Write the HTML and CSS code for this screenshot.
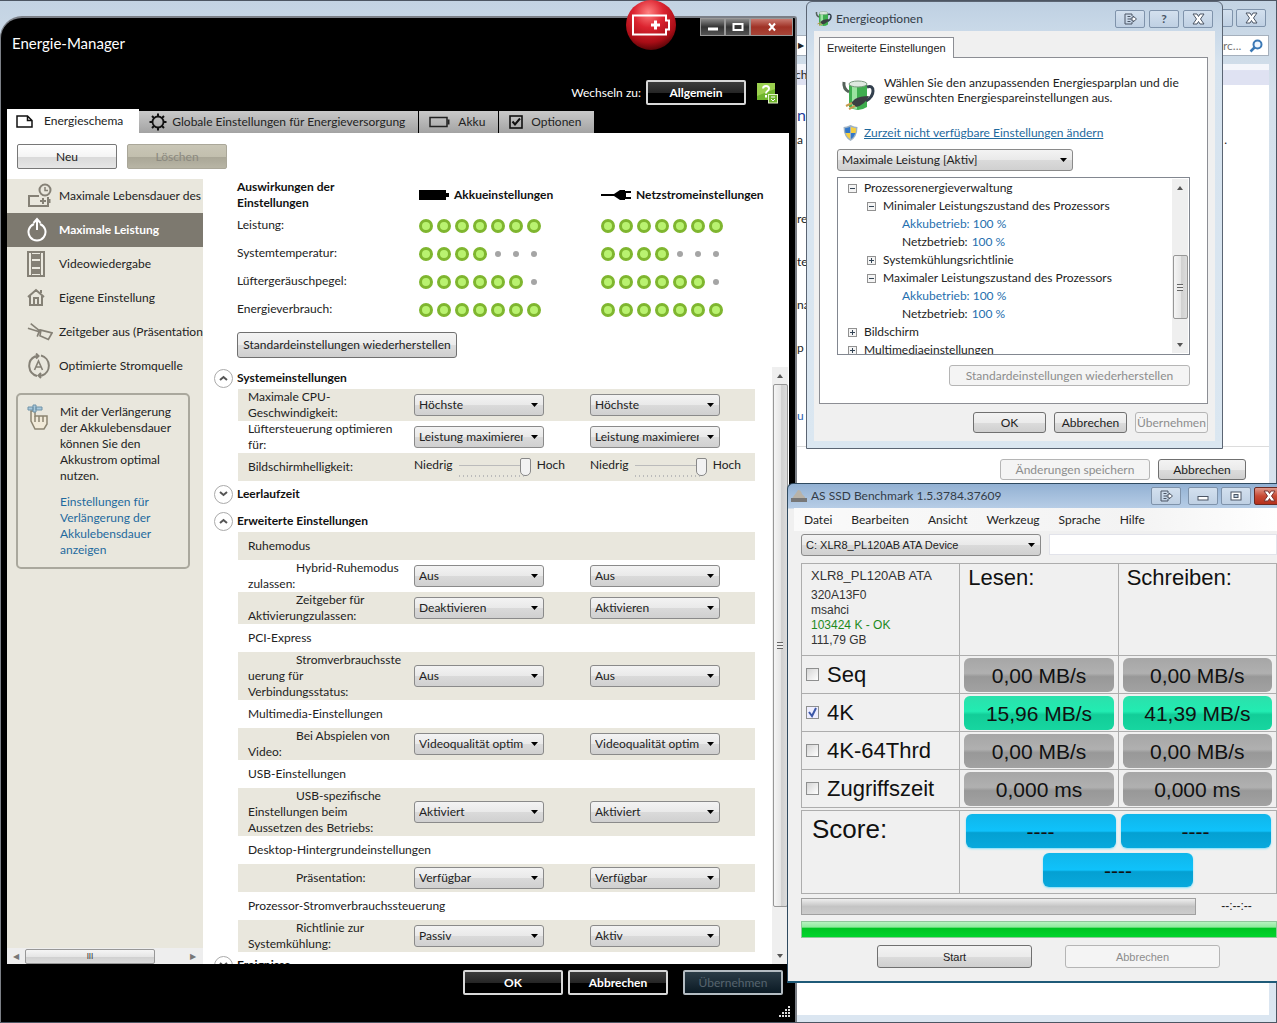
FILE: index.html
```
<!DOCTYPE html>
<html lang="de">
<head>
  <meta charset="UTF-8" />
  <meta name="viewport" content="width=device-width, initial-scale=1.0"/>
  <title>Energie-Manager</title>
  <link rel="stylesheet" href="styles.css">
</head>
<body>
  <!-- Explorer window in the back -->
  <div class="explorer">
    <div class="explorer-title">
      <button class="aero-btn" aria-label="Maximieren"></button>
      <button class="aero-btn" aria-label="Schließen"><svg width="13" height="12" viewBox="0 0 13 12"><path d="M1 1h4l1.500 2.500L8 1h4L8.500 6 12 11H8L6.500 8.500 5 11H1l3.500-5z" fill="#fff" stroke="#4b5564"/></svg></button>
    </div>
    <div class="explorer-address">
      <span class="arrow">▶</span>
      <span class="search">rc...
        <svg width="14" height="14" viewBox="0 0 14 14"><circle cx="8.500" cy="5.500" r="4" fill="#eef6ff" stroke="#3a78b5" stroke-width="2"/><path d="M5.500 8.500L1.500 12.500" stroke="#3a78b5" stroke-width="2.500"/></svg>
      </span>
    </div>
    <div class="explorer-toolbar">ch</div>
    <div class="explorer-body">
      <div class="explorer-text">
        <p class="head">n</p>
        <p class="first"><span>a</span><span>.</span></p>
        <p>re</p>
        <p>te</p>
        <p>na</p>
        <p>p</p>
        <p class="more">u</p>
      </div>
      <div class="explorer-footer">
        <button class="btn wide" disabled>Änderungen speichern</button>
        <button class="btn">Abbrechen</button>
      </div>
    </div>
  </div>

  <!-- Energie-Manager -->
  <div class="manager">
    <svg class="ball" width="52" height="52" viewBox="0 0 52 52">
      <defs><radialGradient id="red" cx="45%" cy="25%" r="75%"><stop offset="0" stop-color="#ff8080"/><stop offset=".4" stop-color="#dc2430"/><stop offset=".8" stop-color="#a80d16"/><stop offset="1" stop-color="#5c0508"/></radialGradient></defs>
      <circle cx="26" cy="25" r="25" fill="url(#red)"/>
      <path d="M8 15.500h33v5h3v9h-3v5H8z" fill="none" stroke="#fff" stroke-width="2"/>
      <path d="M26 25h9M30.500 20.500v9" stroke="#fff" stroke-width="3"/>
    </svg>
    <div class="manager-head">
      <h1>Energie-Manager</h1>
      <div class="window-btns">
        <button aria-label="Minimieren"><svg width="12" height="12" viewBox="0 0 12 12"><path d="M1 8h10" stroke="#fff" stroke-width="3"/></svg></button>
        <button aria-label="Maximieren"><svg width="12" height="12" viewBox="0 0 12 12"><rect x="1.500" y="3" width="9" height="6" fill="none" stroke="#fff" stroke-width="2"/></svg></button>
        <button class="close" aria-label="Schließen"><svg width="10" height="10" viewBox="0 0 10 10"><path d="M2 1.500l6 7M8 1.500l-6 7" stroke="#fff" stroke-width="2"/></svg></button>
      </div>
    </div>
    <div class="switch">
      <span>Wechseln zu:</span>
      <button class="dark-btn">Allgemein</button>
      <svg width="22" height="22" viewBox="0 0 22 22"><rect x="0" y="1" width="18" height="17" fill="#6fb52c"/><path d="M0 1h18v6L0 14z" fill="#9bd04e"/><path d="M6 6.500q0-2.500 3-2.500t3 2.500q0 1.500-1.500 2.500T9 11.500M9 13v2.500" fill="none" stroke="#fff" stroke-width="2"/><rect x="11.500" y="12.500" width="9" height="8.500" fill="#6fb52c" stroke="#e3f3c8"/><path d="M14 15h4M14 17l2 2 2-2" stroke="#fff" fill="none"/></svg>
    </div>
    <div class="tabs">
      <button class="tab active">
        <svg width="18" height="13" viewBox="0 0 18 13"><path d="M1 1h10.500L16 5.500V12H1zM11.500 1v4.500H16" fill="none" stroke="#111" stroke-width="1.500"/></svg>
        Energieschema
      </button>
      <button class="tab gear">
        <svg width="18" height="18" viewBox="0 0 18 18"><circle cx="9" cy="9" r="5.500" fill="none" stroke="#111" stroke-width="1.800"/><path d="M9 3.500V0.500M9 14.500v3M3.500 9h-3M14.500 9h3M5 5L3 3M13 5l2-2M5 13l-2 2M13 13l2 2" stroke="#111" stroke-width="2"/></svg>
        Globale Einstellungen für Energieversorgung
      </button>
      <button class="tab">
        <svg width="21" height="12" viewBox="0 0 21 12"><path d="M1 1.500h17v9H1z" fill="none" stroke="#222" stroke-width="1.500"/><path d="M19.500 3.500v5" stroke="#222" stroke-width="2"/></svg>
        Akku
      </button>
      <button class="tab">
        <svg width="14" height="14" viewBox="0 0 14 14"><rect x="1" y="1" width="12" height="12" fill="none" stroke="#111" stroke-width="1.600"/><path d="M3.500 6.500L6 9.500l5-6" fill="none" stroke="#111" stroke-width="2"/></svg>
        Optionen
      </button>
    </div>

    <div class="manager-body">
      <div class="toolbar">
        <button class="light-btn">Neu</button>
        <button class="light-btn" disabled>Löschen</button>
      </div>
      <div class="columns">
        <div class="sidebar">
          <ul class="plans">
            <li><svg width="26" height="26" viewBox="0 0 26 26" fill="none" stroke="#858176" stroke-width="2"><circle cx="18" cy="7" r="5.500"/><path d="M18 4v3.500h3" stroke-width="1.500"/><path d="M12 13H2v10h19v-9M22.500 16v4M13 18h6M16 15v6"/></svg>Maximale Lebensdauer des</li>
            <li class="selected"><svg width="26" height="26" viewBox="0 0 26 26" fill="none" stroke="#fff" stroke-width="2"><path d="M7 7a8.500 8.500 0 1 0 6 0M10 13V3M6.500 6L10 2l3.500 4"/></svg>Maximale Leistung</li>
            <li><svg width="26" height="26" viewBox="0 0 26 26"><path d="M0 0h18v26H0z" fill="#858176"/><path d="M2 2h2v22H2zM14 2h2v22h-2zM5 2h8v1H5zM5 8h8v2H5zM5 16h8v2H5zM5 23h8v1H5z" fill="#eceae0"/></svg>Videowiedergabe</li>
            <li><svg width="26" height="26" viewBox="0 0 26 26" fill="none" stroke="#858176" stroke-width="2"><path d="M1 12L9 5l8 7M3 11v9h12v-9M14 8V5M7 20v-7h4v7"/></svg>Eigene Einstellung</li>
            <li><svg width="26" height="26" viewBox="0 0 28 26" fill="none" stroke="#858176" stroke-width="1.800"><path d="M4 4l10 8M1 9l13 4M14 10l-3 8M15 11l12 3-4 7-9-4z"/></svg>Zeitgeber aus (Präsentation</li>
            <li><svg width="26" height="26" viewBox="0 0 26 26" fill="none" stroke="#858176" stroke-width="2"><path d="M10 23A10.500 10.500 0 0 1 8 3.500l3-.5M9 .500L11.500 3 9 5.500M14 2.500A10.500 10.500 0 0 1 15 22.500h-3M14 20l-2.500 2.500L14 25"/><path d="M7.500 17l4-9 4 9M9 14h5" stroke-width="1.600"/></svg>Optimierte Stromquelle</li>
          </ul>
          <div class="tip">
            <svg width="22" height="26" viewBox="0 0 22 26"><path d="M4 17V7h4v5h12v8l-3 5H8z" fill="#f1ead8" stroke="#8c8571" stroke-width="1.500"/><path d="M8 12v6M12 12v6M16 12v6" stroke="#8c8571" stroke-width="1.500"/><path d="M1 3h5v3H1zM9 3h6v3H9zM6 1h3v7H6z" fill="#a9c9dc" stroke="#6f93a8"/></svg>
            <div>
              <p>Mit der Verlängerung<br>der Akkulebensdauer<br>können Sie den<br>Akkustrom optimal<br>nutzen.</p>
              <a href="#">Einstellungen für<br>Verlängerung der<br>Akkulebensdauer<br>anzeigen</a>
            </div>
          </div>
          <div class="hscroll"><span>◀</span><i class="thumb">III</i><span>▶</span></div>
        </div>

        <div class="main">
          <table class="impact">
            <thead>
              <tr>
                <th>Auswirkungen der<br>Einstellungen</th>
                <th><span><svg width="30" height="12" viewBox="0 0 30 12"><path d="M0 1h27v3h3v4h-3v3H0z"/></svg>Akkueinstellungen</span></th>
                <th><span><svg width="30" height="12" viewBox="0 0 30 12"><path d="M0 5h13l6-4h5v1h6v2h-5v4h5v2h-6v1h-5l-6-4H0z"/></svg>Netzstromeinstellungen</span></th>
              </tr>
            </thead>
            <tbody>
              <tr><td>Leistung:</td><td class="dots" data-level="7"></td><td class="dots" data-level="7"></td></tr>
              <tr><td>Systemtemperatur:</td><td class="dots" data-level="4"></td><td class="dots" data-level="4"></td></tr>
              <tr><td>Lüftergeräuschpegel:</td><td class="dots" data-level="6"></td><td class="dots" data-level="6"></td></tr>
              <tr><td>Energieverbrauch:</td><td class="dots" data-level="7"></td><td class="dots" data-level="7"></td></tr>
            </tbody>
          </table>
          <button class="btn restore">Standardeinstellungen wiederherstellen</button>

          <div class="settings">
            <div class="settings-list">
              <section>
                <h2><button class="fold" aria-label="Zuklappen"><svg width="9" height="6" viewBox="0 0 9 6"><path d="M1 5l3.500-3L8 5" fill="none" stroke="#555" stroke-width="2"/></svg></button>Systemeinstellungen</h2>
                <div class="row shade">
                  <label for="cpu-a">Maximale CPU-<br>Geschwindigkeit:</label>
                  <select id="cpu-a"><option>Höchste</option></select>
                  <select aria-label="CPU Netz"><option>Höchste</option></select>
                </div>
                <div class="row">
                  <label for="fan-a">Lüftersteuerung optimieren<br>für:</label>
                  <select id="fan-a"><option>Leistung maximieren</option></select>
                  <select aria-label="Lüfter Netz"><option>Leistung maximieren</option></select>
                </div>
                <div class="row small shade">
                  <label for="bright-a">Bildschirmhelligkeit:</label>
                  <div class="slider">Niedrig <input id="bright-a" type="range" value="100"> Hoch</div>
                  <div class="slider">Niedrig <input aria-label="Helligkeit Netz" type="range" value="100"> Hoch</div>
                </div>
              </section>
              <section class="closed">
                <h2><button class="fold" aria-label="Aufklappen"><svg width="9" height="6" viewBox="0 0 9 6"><path d="M1 1l3.500 3L8 1" fill="none" stroke="#555" stroke-width="2"/></svg></button>Leerlaufzeit</h2>
              </section>
              <section>
                <h2><button class="fold" aria-label="Zuklappen"><svg width="9" height="6" viewBox="0 0 9 6"><path d="M1 5l3.500-3L8 5" fill="none" stroke="#555" stroke-width="2"/></svg></button>Erweiterte Einstellungen</h2>
                <div class="row small shade"><h3>Ruhemodus</h3></div>
                <div class="row">
                  <label class="sub" for="hybrid">Hybrid-Ruhemodus<br>zulassen:</label>
                  <select id="hybrid"><option>Aus</option></select>
                  <select aria-label="Hybrid Netz"><option>Aus</option></select>
                </div>
                <div class="row shade">
                  <label class="sub" for="timer">Zeitgeber für<br>Aktivierungzulassen:</label>
                  <select id="timer"><option>Deaktivieren</option></select>
                  <select aria-label="Zeitgeber Netz"><option>Aktivieren</option></select>
                </div>
                <div class="row small"><h3>PCI-Express</h3></div>
                <div class="row tall shade">
                  <label class="sub" for="pci">Stromverbrauchsste<br>uerung für<br>Verbindungsstatus:</label>
                  <select id="pci"><option>Aus</option></select>
                  <select aria-label="PCI Netz"><option>Aus</option></select>
                </div>
                <div class="row small"><h3>Multimedia-Einstellungen</h3></div>
                <div class="row shade">
                  <label class="sub" for="video">Bei Abspielen von<br>Video:</label>
                  <select id="video"><option>Videoqualität optim</option></select>
                  <select aria-label="Video Netz"><option>Videoqualität optim</option></select>
                </div>
                <div class="row small"><h3>USB-Einstellungen</h3></div>
                <div class="row tall shade">
                  <label class="sub" for="usb">USB-spezifische<br>Einstellungen beim<br>Aussetzen des Betriebs:</label>
                  <select id="usb"><option>Aktiviert</option></select>
                  <select aria-label="USB Netz"><option>Aktiviert</option></select>
                </div>
                <div class="row small"><h3>Desktop-Hintergrundeinstellungen</h3></div>
                <div class="row small shade">
                  <label class="sub" for="show">Präsentation:</label>
                  <select id="show"><option>Verfügbar</option></select>
                  <select aria-label="Präsentation Netz"><option>Verfügbar</option></select>
                </div>
                <div class="row small"><h3>Prozessor-Stromverbrauchssteuerung</h3></div>
                <div class="row shade">
                  <label class="sub" for="cool">Richtlinie zur<br>Systemkühlung:</label>
                  <select id="cool"><option>Passiv</option></select>
                  <select aria-label="Kühlung Netz"><option>Aktiv</option></select>
                </div>
              </section>
              <section>
                <h2><button class="fold" aria-label="Aufklappen"><svg width="9" height="6" viewBox="0 0 9 6"><path d="M1 1l3.500 3L8 1" fill="none" stroke="#555" stroke-width="2"/></svg></button>Ereignisse</h2>
              </section>
            </div>
            <div class="vscroll"><span class="up"></span><i class="thumb"></i><span class="down"></span></div>
          </div>
        </div>
      </div>
    </div>

    <div class="manager-foot">
      <button class="dark-btn">OK</button>
      <button class="dark-btn">Abbrechen</button>
      <button class="dark-btn apply" disabled>Übernehmen</button>
    </div>
    <svg class="grip" width="12" height="12" viewBox="0 0 12 12" fill="#ddd"><path d="M9 0h2v2H9zM9 3h2v2H9zM9 6h2v2H9zM9 9h2v2H9zM6 3h2v2H6zM6 6h2v2H6zM6 9h2v2H6zM3 6h2v2H3zM3 9h2v2H3zM0 9h2v2H0z"/></svg>
  </div>

  <!-- Energieoptionen -->
  <div class="options">
    <div class="titlebar">
      <svg width="17" height="17" viewBox="0 0 34 34"><use href="#pot"/></svg>
      <span class="title">Energieoptionen</span>
      <button class="aero-btn" aria-label="Verschieben"><svg width="13" height="12" viewBox="0 0 13 12" fill="none" stroke="#4b5564"><path d="M8 3V1H1v10h7V9M3.500 3.500h3M3.500 6h3M3.500 8.500h3"/><path d="M7 5h2V3l3.500 3L9 9V7H7z" fill="#fff"/></svg></button>
      <button class="aero-btn help" aria-label="Hilfe">?</button>
      <button class="aero-btn" aria-label="Schließen"><svg width="13" height="12" viewBox="0 0 13 12"><path d="M1 1h4l1.500 2.500L8 1h4L8.500 6 12 11H8L6.500 8.500 5 11H1l3.500-5z" fill="#fff" stroke="#4b5564"/></svg></button>
    </div>
    <div class="client">
      <span class="page-tab">Erweiterte Einstellungen</span>
      <div class="page">
        <div class="intro">
          <svg width="34" height="34" viewBox="0 0 34 34">
            <g id="pot">
              <path d="M8 7q9-4 18 0v22q-9 6-18 0z" fill="#3fae4f"/>
              <path d="M11 8q3-1 5-1v24q-3 0-5-1z" fill="#9be3a0"/>
              <ellipse cx="17" cy="6" rx="9" ry="3" fill="#dfe9e0" stroke="#7c9a80"/>
              <path d="M8 14Q2 11 3 4" fill="none" stroke="#55625a" stroke-width="3"/>
              <path d="M26 9q6-2 6 4t-7 10" fill="none" stroke="#333f4d" stroke-width="3"/>
              <path d="M28 18q-9 0-14 3l-4 4 5 4q9-2 13-11z" fill="#3b3f42"/>
              <path d="M11 25l-6 3M14 28l-6 3" stroke="#c79a4e" stroke-width="2"/>
            </g>
          </svg>
          <p>Wählen Sie den anzupassenden Energiesparplan und die<br>gewünschten Energiespareinstellungen aus.</p>
        </div>
        <div class="unlock">
          <svg width="15" height="16" viewBox="0 0 15 16"><path d="M7.500 0q4 2 7 2 0 10-7 14Q.500 12 .500 2q3 0 7-2z" fill="#9fb3c4"/><path d="M7 2Q4.500 3 2 3.300 2 6 2.500 8H7z" fill="#3377c8"/><path d="M8 2q2.500 1 5 1.300Q13 6 12.500 8H8z" fill="#f5cf42"/><path d="M7 8H2.500Q4 12 7 14z" fill="#f5cf42"/><path d="M8 8h4.500Q11 12 8 14z" fill="#3377c8"/></svg>
          <a href="#">Zurzeit nicht verfügbare Einstellungen ändern</a>
        </div>
        <select class="plan" aria-label="Energiesparplan"><option>Maximale Leistung [Aktiv]</option></select>
        <div class="tree-box">
          <ul class="tree">
            <li><i class="box minus"></i>Prozessorenergieverwaltung</li>
            <li class="l2"><i class="box minus"></i>Minimaler Leistungszustand des Prozessors</li>
            <li class="l3 blue">Akkubetrieb: 100 %</li>
            <li class="l3">Netzbetrieb: <span class="blue">100 %</span></li>
            <li class="l2"><i class="box plus"></i>Systemkühlungsrichtlinie</li>
            <li class="l2"><i class="box minus"></i>Maximaler Leistungszustand des Prozessors</li>
            <li class="l3 blue">Akkubetrieb: 100 %</li>
            <li class="l3">Netzbetrieb: <span class="blue">100 %</span></li>
            <li><i class="box plus"></i>Bildschirm</li>
            <li><i class="box plus"></i>Multimediaeinstellungen</li>
          </ul>
          <div class="vscroll"><span class="up"></span><i class="thumb"></i><span class="down"></span></div>
        </div>
        <button class="btn reset" disabled>Standardeinstellungen wiederherstellen</button>
      </div>
      <div class="dialog-btns">
        <button class="btn">OK</button>
        <button class="btn">Abbrechen</button>
        <button class="btn" disabled>Übernehmen</button>
      </div>
    </div>
  </div>

  <!-- AS SSD Benchmark -->
  <div class="ssd">
    <div class="titlebar">
      <svg width="16" height="14" viewBox="0 0 16 14"><path d="M2 8l3-4 2-3q3 0 4 4l3 3v3H0z" fill="#b9b3a8"/><path d="M0 9h16v4H0z" fill="#777"/></svg>
      <span class="title">AS SSD Benchmark 1.5.3784.37609</span>
      <button class="aero-btn" aria-label="Verschieben"><svg width="13" height="12" viewBox="0 0 13 12" fill="none" stroke="#4b5564"><path d="M8 3V1H1v10h7V9M3.500 3.500h3M3.500 6h3M3.500 8.500h3"/><path d="M7 5h2V3l3.500 3L9 9V7H7z" fill="#fff"/></svg></button>
      <button class="aero-btn" aria-label="Minimieren"><svg width="12" height="12" viewBox="0 0 12 12"><rect x="1" y="6.500" width="10" height="3.500" fill="#fff" stroke="#4b5564"/></svg></button>
      <button class="aero-btn" aria-label="Maximieren"><svg width="12" height="12" viewBox="0 0 12 12"><rect x="1" y="2" width="10" height="8" fill="#fff" stroke="#4b5564"/><rect x="4" y="4.500" width="4" height="3" fill="#bcd" stroke="#4b5564"/></svg></button>
      <button class="aero-btn red" aria-label="Schließen"><svg width="13" height="12" viewBox="0 0 13 12"><path d="M1 1h4l1.500 2.500L8 1h4L8.500 6 12 11H8L6.500 8.500 5 11H1l3.500-5z" fill="#fff" stroke="#733"/></svg></button>
    </div>
    <div class="menu"><a href="#">Datei</a><a href="#">Bearbeiten</a><a href="#">Ansicht</a><a href="#">Werkzeug</a><a href="#">Sprache</a><a href="#">Hilfe</a></div>
    <div class="ssd-body">
      <div class="drive">
        <select aria-label="Laufwerk"><option>C: XLR8_PL120AB ATA Device</option></select>
        <input type="text" aria-label="Name">
      </div>
      <table class="results">
        <thead>
          <tr>
            <td class="info"><p class="name">XLR8_PL120AB ATA</p><p>320A13F0</p><p>msahci</p><p class="ok">103424 K - OK</p><p>111,79 GB</p></td>
            <th>Lesen:</th>
            <th>Schreiben:</th>
          </tr>
        </thead>
        <tbody>
          <tr><td><label><input type="checkbox">Seq</label></td><td><div class="pill">0,00 MB/s</div></td><td><div class="pill">0,00 MB/s</div></td></tr>
          <tr><td><label><input type="checkbox" checked>4K</label></td><td><div class="pill green">15,96 MB/s</div></td><td><div class="pill green">41,39 MB/s</div></td></tr>
          <tr><td><label><input type="checkbox">4K-64Thrd</label></td><td><div class="pill">0,00 MB/s</div></td><td><div class="pill">0,00 MB/s</div></td></tr>
          <tr><td><label><input type="checkbox">Zugriffszeit</label></td><td><div class="pill">0,000 ms</div></td><td><div class="pill">0,000 ms</div></td></tr>
        </tbody>
      </table>
      <div class="score">
        <div class="score-label">Score:</div>
        <div class="score-values">
          <div class="pill blue">----</div>
          <div class="pill blue">----</div>
          <div class="pill blue">----</div>
        </div>
      </div>
      <div class="progress"><div class="bar"></div><span>--:--:--</span></div>
      <div class="bar full"></div>
      <div class="ssd-btns">
        <button class="btn">Start</button>
        <button class="btn" disabled>Abbrechen</button>
      </div>
    </div>
  </div>

  <script>
    // seven steps per cell, the first ones lit
    document.querySelectorAll(".dots").forEach(cell => {
      const level = Number(cell.dataset.level);
      for (let i = 0; i < 7; i++) {
        const dot = document.createElement("i");
        dot.className = i < level ? "dot on" : "dot";
        cell.appendChild(dot);
      }
    });
  </script>
</body>
</html>
```
FILE: styles.css
```
* {
  box-sizing: border-box;
}

body {
  margin: 0;
  height: 100vh;
  overflow: hidden;
  position: relative;
  font-family: Lato, "Open Sans", sans-serif;
  font-size: 12px;
  line-height: 16px;
  color: #222;
  background: #3a4350;
}

h1, h2, h3, p, ul {
  margin: 0;
  padding: 0;
  list-style: none;
}

button, select, input {
  font: inherit;
  color: inherit;
  margin: 0;
}

button {
  display: inline-flex;
  align-items: center;
  justify-content: center;
  padding: 0;
  white-space: nowrap;
}

a {
  color: #1f6a9e;
}

select {
  appearance: none;
  height: 22px;
  padding: 0 20px 0 4px;
  border: 1px solid #8a8a8a;
  border-radius: 3px;
  background: url("data:image/svg+xml,%3Csvg xmlns='http://www.w3.org/2000/svg' width='7' height='4'%3E%3Cpath d='M0 0h7L3.500 4z'/%3E%3C/svg%3E") no-repeat right 5px center,
    linear-gradient(#f3f3f3, #e9e9e9 50%, #dadada 51%, #d0d0d0);
}

.btn {
  height: 21px;
  border: 1px solid #707070;
  border-radius: 3px;
  background: linear-gradient(#f3f3f3, #ebebeb 50%, #dcdcdc 51%, #cfcfcf);
}

.btn:disabled {
  color: #8d8d8d;
  border-color: #b5b5b5;
  background: #f4f4f4;
}

.aero-btn {
  width: 30px;
  height: 18px;
  flex: none;
  border: 1px solid #7f93ab;
  border-radius: 2px;
  background: linear-gradient(#d3e0ee, #bfd0e3);
}

.aero-btn.red {
  border-color: #6b2a22;
  background: linear-gradient(#e09a8c, #c84a35 50%, #b5301c);
}

.help {
  font-weight: bold;
  color: #4b5564;
}

.vscroll {
  width: 16px;
  flex: none;
  display: flex;
  flex-direction: column;
  align-items: center;
  background: #efefef;
}

.vscroll span {
  width: 0;
  height: 0;
  margin: 7px 0 6px;
  border: 3px solid transparent;
}

.vscroll .up {
  border-top: 0;
  border-bottom: 4px solid #555;
}

.vscroll .down {
  border-bottom: 0;
  border-top: 4px solid #555;
}

.thumb {
  border: 1px solid #979797;
  border-radius: 2px;
}

.vscroll .thumb {
  width: 15px;
  display: flex;
  align-items: center;
  justify-content: center;
  background: linear-gradient(90deg, #f5f5f5, #e6e6e6 50%, #cfcfcf 51%, #dcdcdc);
}

.vscroll .thumb::before {
  content: "";
  width: 6px;
  height: 7px;
  background: repeating-linear-gradient(#666 0 1px, #eee 1px 3px);
}

/* explorer window */
.explorer {
  position: absolute;
  inset: 0;
  display: flex;
  flex-direction: column;
  padding: 0 7px 7px 0;
  border: 1px solid #4d5663;
  border-left: 0;
  background: linear-gradient(#c3d3e3, #d5e1ec 90px, #dbe6f1);
}

.explorer-title {
  display: flex;
  justify-content: flex-end;
  gap: 3px;
  padding: 8px 3px;
}

.explorer-address {
  display: flex;
  justify-content: space-between;
  height: 21px;
  padding-left: 797px;
  line-height: 19px;
  background: #fff;
  border: 1px solid #a5b0bd;
}

.arrow {
  font-size: 8px;
}

.search {
  display: flex;
  align-items: center;
  justify-content: space-between;
  width: 45px;
  padding-right: 5px;
  color: #777;
}

.search svg {
  flex: none;
}

.explorer-toolbar {
  margin-top: 8px;
  padding: 3px 0 2px 795px;
  background: linear-gradient(#f4f6fb 30%, #dfe2f2 31%);
}

.explorer-body {
  flex: 1;
  background: #fff;
}

.explorer-text {
  height: 362px;
  padding-left: 797px;
  border-bottom: 1px solid #dcdcdc;
}

.explorer-text p {
  margin-bottom: 27px;
}

.explorer-text .head {
  padding-top: 20px;
  margin-bottom: 7px;
  font-size: 16px;
  line-height: 20px;
  color: #1e3f9a;
}

.explorer-text .first {
  display: flex;
  justify-content: space-between;
  margin-bottom: 63px;
  padding-right: 42px;
}

.explorer-text .more {
  padding-top: 25px;
  color: #2a5fb0;
}

.explorer-footer {
  display: flex;
  justify-content: flex-end;
  gap: 8px;
  padding: 12px 23px;
}

.explorer-footer .btn {
  width: 88px;
}

.explorer-footer .wide {
  width: 150px;
}

/* Energie-Manager */
.manager {
  position: absolute;
  top: 16px;
  bottom: 1px;
  left: 0;
  width: 797px;
  display: flex;
  flex-direction: column;
  padding: 0 6px;
  border: 2px solid #7b7f86;
  border-left-width: 1px;
  border-bottom: 0;
  border-radius: 22px 3px 0 0;
  background: #000;
}

.ball {
  position: absolute;
  top: -18px;
  left: 624px;
}

.manager-head {
  display: flex;
  justify-content: space-between;
  height: 62px;
  padding-left: 5px;
  color: #fff;
}

.manager-head h1 {
  padding-top: 15px;
  font-size: 15px;
  line-height: 20px;
  font-weight: normal;
}

.window-btns {
  display: flex;
  height: 18px;
  margin-right: -4px;
}

.window-btns button {
  width: 25px;
  border: 1px solid #999;
  background: linear-gradient(#8a8a8a, #333 50%, #555);
}

.window-btns .close {
  width: 43px;
  background: linear-gradient(#c97a70, #a03226 50%, #a84538);
}

.switch {
  display: flex;
  align-items: center;
  justify-content: flex-end;
  gap: 5px;
  padding-right: 10px;
  color: #fff;
}

.switch svg {
  margin-left: 6px;
}

.dark-btn {
  width: 100px;
  height: 25px;
  border: 2px solid #d8d8d8;
  border-radius: 2px;
  color: #fff;
  font-weight: bold;
  background: linear-gradient(#3c3c3c, #262626 50%, #000 51%);
}

.dark-btn.apply {
  margin-left: 10px;
  border-color: #b4bcc2;
  color: #56646e;
  font-weight: normal;
  background: linear-gradient(#2b3c47, #0b1a24);
}

.tabs {
  display: flex;
  align-items: flex-end;
  gap: 1px;
  height: 28px;
}

.tab {
  height: 22px;
  gap: 8px;
  padding: 0 13px 0 10px;
  border: 0;
  background: linear-gradient(#c9c9c9, #a3a3a3);
}

.tab.active {
  height: 24px;
  margin-right: -1px;
  gap: 10px;
  padding: 0 16px 0 9px;
  background: #fff;
}

.tab.gear {
  gap: 5px;
}

.manager-body {
  flex: 1;
  min-height: 0;
  display: flex;
  flex-direction: column;
  background: #fff;
}

.toolbar {
  display: flex;
  gap: 10px;
  padding: 11px 10px 10px;
}

.light-btn {
  width: 100px;
  height: 25px;
  border: 1px solid #777;
  border-radius: 2px;
  background: linear-gradient(#fff, #f4f4f4 50%, #d9d9d9 51%, #e6e6e6);
}

.light-btn:disabled {
  border-color: #aaa799;
  color: #8b897f;
  background: linear-gradient(#c9c6b6, #c2bfae 50%, #a9a696 51%, #b8b5a5);
}

.columns {
  flex: 1;
  min-height: 0;
  display: flex;
}

.sidebar {
  width: 196px;
  display: flex;
  flex-direction: column;
  background: #e9e7dd;
}

.plans li {
  display: flex;
  align-items: center;
  height: 34px;
  padding-left: 20px;
  overflow: hidden;
  white-space: nowrap;
}

.plans svg {
  flex: none;
  width: 26px;
  margin-right: 6px;
}

.plans .selected {
  background: #7d796f;
  color: #fff;
  font-weight: bold;
}

.tip {
  display: flex;
  gap: 11px;
  margin: 10px 13px 0 9px;
  padding: 9px;
  border: 2px solid #aaa89d;
  border-radius: 5px;
  white-space: nowrap;
}

.tip svg {
  flex: none;
}

.tip p {
  margin-bottom: 10px;
}

.tip a {
  text-decoration: none;
}

.hscroll {
  display: flex;
  align-items: center;
  height: 16px;
  margin-top: auto;
  padding: 0 6px;
  background: #eee;
  font-size: 8px;
  color: #777;
}

.hscroll .thumb {
  width: 130px;
  height: 15px;
  margin: 0 35px 0 6px;
  line-height: 13px;
  text-align: center;
  font-style: normal;
  color: #333;
  background: linear-gradient(#f5f5f5, #e6e6e6 50%, #cfcfcf 51%, #dcdcdc);
}

.main {
  flex: 1;
  display: flex;
  flex-direction: column;
  min-width: 0;
  padding-left: 11px;
}

.impact {
  margin-left: 23px;
  border-spacing: 0;
  table-layout: fixed;
  width: 546px;
}

.impact th, .impact td {
  height: 28px;
  padding: 0;
  text-align: left;
}

.impact th {
  height: 32px;
  color: #111;
  white-space: nowrap;
}

.impact thead span {
  display: flex;
  align-items: center;
  gap: 5px;
}

.dot {
  display: inline-block;
  vertical-align: middle;
  width: 6px;
  height: 6px;
  margin: 0 8px 0 4px;
  border-radius: 50%;
  background: #a5a5a5;
}

.dot.on {
  width: 14px;
  height: 14px;
  margin: 0 4px 0 0;
  border: 3px solid #7fb62f;
  background: #b9f270;
}

.restore {
  align-self: flex-start;
  width: 220px;
  height: 26px;
  margin: 9px 0 9px 23px;
}

.settings {
  flex: 1;
  min-height: 0;
  display: flex;
  padding-right: 1px;
}

.settings-list {
  flex: 1;
  overflow: hidden;
}

.settings-list section {
  padding-bottom: 2px;
}

.settings-list .closed {
  padding-bottom: 5px;
}

h2 {
  display: flex;
  align-items: center;
  gap: 4px;
  height: 22px;
  font-size: 12px;
  color: #111;
}

.fold {
  width: 19px;
  height: 19px;
  border: 1px solid #aaa;
  border-radius: 50%;
  background: #fff;
}

.row {
  display: grid;
  grid-template-columns: 120px 130px 130px;
  column-gap: 46px;
  align-items: center;
  height: 32px;
  margin: 0 17px 0 24px;
  padding-left: 10px;
}

.row label {
  margin-right: -46px;
}

.row.small {
  height: 28px;
}

.row.tall {
  height: 48px;
}

.shade {
  background: #e9e7dd;
}

.sub::before {
  content: "";
  display: inline-block;
  width: 48px;
}

h3 {
  font-size: 12px;
  font-weight: normal;
  white-space: nowrap;
}

.slider {
  display: flex;
  align-items: flex-start;
  justify-content: space-between;
  height: 24px;
  width: 151px;
  padding-top: 2px;
}

input[type="range"] {
  appearance: none;
  width: 72px;
  height: 20px;
  background: linear-gradient(#bbb, #bbb) no-repeat 0 8px / 100% 1px,
    repeating-linear-gradient(90deg, #bbb 0 1px, transparent 1px 4px) no-repeat 0 100% / 90% 2px;
}

input[type="range"]::-webkit-slider-thumb {
  appearance: none;
  width: 11px;
  height: 18px;
  border: 1px solid #888;
  border-radius: 2px 2px 5px 5px;
  background: #f2f2f2;
}

.manager-foot {
  display: flex;
  justify-content: flex-end;
  gap: 5px;
  height: 58px;
  padding: 6px 6px 0 0;
}

.grip {
  position: absolute;
  right: 4px;
  bottom: 4px;
}

/* shared by the two small windows */
.titlebar {
  display: flex;
  align-items: center;
}

.title {
  flex: 1;
  padding-left: 4px;
  color: #333c47;
}

/* Energieoptionen */
.options {
  position: absolute;
  top: 1px;
  left: 806px;
  width: 417px;
  padding: 0 7px 7px;
  border: 1px solid #5b6573;
  border-radius: 6px 6px 0 0;
  background: linear-gradient(#bed0e2, #d6e3ef 60px, #dbe7f1);
}

.options .titlebar {
  height: 29px;
  padding: 4px 2px 0 1px;
}

.options .aero-btn + .aero-btn {
  margin-left: 4px;
}

.client {
  padding: 6px 7px 8px 5px;
  background: #f0f0f0;
}

.page-tab {
  position: relative;
  display: inline-block;
  height: 21px;
  padding: 2px 7px;
  border: 1px solid #8c8e94;
  border-bottom: 0;
  background: #fff;
  vertical-align: top;
  font-family: "Liberation Sans", Arial, sans-serif;
  font-size: 11px;
}

.page {
  display: flex;
  flex-direction: column;
  margin-top: -1px;
  padding: 17px 17px 17px;
  border: 1px solid #8c8e94;
  background: #fff;
}

.intro {
  display: flex;
  gap: 9px;
  padding-left: 4px;
  line-height: 15px;
  white-space: nowrap;
}

.intro svg {
  flex: none;
  margin-top: 3px;
}

.unlock {
  display: flex;
  align-items: center;
  gap: 6px;
  margin: 13px 0 8px 6px;
}

.plan {
  width: 236px;
}

.tree-box {
  display: flex;
  justify-content: space-between;
  height: 178px;
  margin-top: 6px;
  padding: 1px;
  border: 1px solid #828790;
  overflow: hidden;
}

.tree {
  padding-left: 9px;
  line-height: 18px;
}

.tree li {
  display: flex;
  align-items: center;
  gap: 7px;
  height: 18px;
  white-space: nowrap;
}

.tree .l2 {
  padding-left: 19px;
}

.tree .l3 {
  padding-left: 54px;
  gap: 4px;
}

.tree .blue {
  color: #1f6fae;
}

.box {
  width: 9px;
  height: 9px;
  border: 1px solid #919191;
  background: linear-gradient(#345, #345) no-repeat center / 5px 1px #f4f4f4;
}

.box.plus {
  background: linear-gradient(#345, #345) no-repeat center / 5px 1px,
    linear-gradient(#345, #345) no-repeat center / 1px 5px #f4f4f4;
}

.tree-box .vscroll {
  justify-content: flex-end;
}

.tree-box .up {
  margin-bottom: auto;
}

.tree-box .thumb {
  height: 64px;
  margin-bottom: 17px;
}

.settings .thumb {
  flex: 1;
  margin-bottom: 40px;
}

.reset {
  align-self: flex-end;
  width: 241px;
  margin-top: 10px;
}

.dialog-btns {
  display: flex;
  justify-content: flex-end;
  gap: 8px;
  margin-top: 8px;
}

.dialog-btns .btn {
  width: 73px;
}

/* AS SSD Benchmark */
.ssd {
  position: absolute;
  top: 483px;
  left: 787px;
  right: 0;
  padding-left: 6px;
  border: 1px solid #2f4a60;
  border-right: 0;
  border-bottom: 2px solid #1e5a78;
  border-radius: 6px 0 0 0;
  background: linear-gradient(#93b1d3, #b7cde6 24px, #f0f0f0 25px);
  overflow: hidden;
}

.ssd .titlebar {
  height: 24px;
  margin-right: -7px;
  margin-left: -3px;
}

.ssd .aero-btn {
  margin-left: 3px;
}

.ssd .title + .aero-btn {
  margin-right: 4px;
}

.menu {
  display: flex;
  gap: 19px;
  padding: 4px 10px 3px;
  background: linear-gradient(90deg, #fafafa, #f3f3f3 70%, #fff);
}

.menu a {
  color: #222;
  text-decoration: none;
}

.ssd-body {
  padding-left: 7px;
  font-family: "Liberation Sans", Arial, sans-serif;
}

.drive {
  display: flex;
  gap: 8px;
  padding-top: 3px;
}

.drive select {
  width: 240px;
  font-size: 11px;
}

.drive input {
  flex: 1;
  min-width: 0;
  height: 21px;
  border: 1px solid #e2e3ea;
  background: #fff;
}

.results {
  width: 100%;
  margin-top: 7px;
  border-collapse: collapse;
  table-layout: fixed;
  color: #111;
}

.results td, .results th {
  height: 38px;
  padding: 0 4px;
  border: 1px solid #adadad;
  vertical-align: middle;
}

.results thead th {
  height: 92px;
  padding: 4px 8px;
  font-size: 22px;
  line-height: 20px;
  font-weight: normal;
  text-align: left;
  vertical-align: top;
}

.results .info {
  padding: 4px 9px;
  vertical-align: top;
  font-size: 12px;
  line-height: 15px;
  color: #333;
}

.info .name {
  margin-bottom: 5px;
  font-size: 13px;
  white-space: nowrap;
}

.info .ok {
  color: #1d8a1d;
}

.results label {
  display: flex;
  align-items: center;
  gap: 8px;
  font-size: 22px;
  line-height: 24px;
}

input[type="checkbox"] {
  appearance: none;
  width: 13px;
  height: 13px;
  border: 1px solid #8e8f8f;
  background: linear-gradient(135deg, #d5d5d5, #fff);
}

input[type="checkbox"]:checked {
  background: url("data:image/svg+xml,%3Csvg xmlns='http://www.w3.org/2000/svg' width='11' height='11'%3E%3Cpath d='M2 5l3 4 4-8' fill='none' stroke='%233b57a8' stroke-width='2'/%3E%3C/svg%3E") no-repeat center, #eef;
}

.pill {
  height: 34px;
  border-radius: 6px;
  line-height: 36px;
  font-size: 21px;
  text-align: center;
  color: #111;
  background: linear-gradient(#a6a6a6, #b0b0b0 45%, #989898 55%, #a2a2a2);
}

.pill.green {
  background: linear-gradient(#2be0ab, #22ecb2 45%, #12cd98 55%, #17d6a0);
}

.pill.blue {
  width: 150px;
  background: linear-gradient(#10b6ea, #0fc2fb 50%, #04a0d2 55%, #08a9dd);
  box-shadow: 0 1px 2px #7fe0fb;
}

.score {
  display: grid;
  grid-template-columns: 1fr 2fr;
  margin-top: 2px;
  border: 1px solid #adadad;
}

.score-label {
  padding: 5px 10px;
  border-right: 1px solid #adadad;
  font-size: 26px;
  line-height: 26px;
  color: #111;
}

.score-values {
  display: flex;
  flex-wrap: wrap;
  justify-content: center;
  gap: 5px;
  padding: 3px 2px 6px;
}

.progress {
  display: flex;
  margin-top: 4px;
}

.progress span {
  flex: 1;
  text-align: center;
}

.bar {
  width: 395px;
  height: 17px;
  border: 1px solid #a0a0a0;
  background: linear-gradient(#eee, #c4c4c4 50%, #ccc);
}

.bar.full {
  width: 100%;
  margin-top: 6px;
  border-color: #8fc79a;
  background: linear-gradient(#b6f3bf, #8eea9c 35%, #00c423 40%, #00d52c);
}

.ssd-btns {
  display: flex;
  gap: 33px;
  padding: 7px 0 13px 76px;
}

.ssd-btns .btn {
  width: 155px;
  height: 23px;
  font-size: 11px;
}
```
